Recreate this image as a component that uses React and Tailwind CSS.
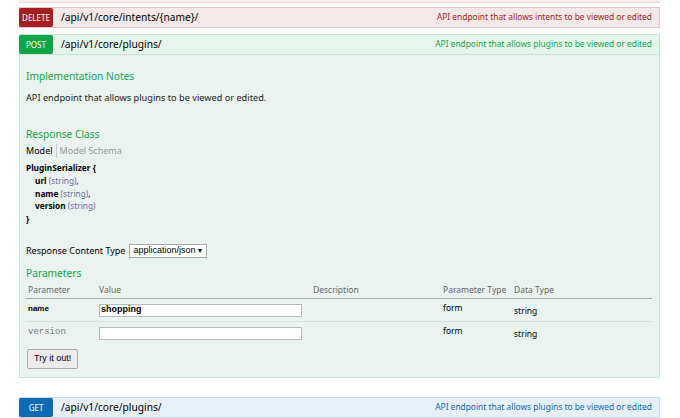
const FONT = { fontFamily: '"Noto Sans", "Open Sans", sans-serif' }
const ARIAL = { fontFamily: '"Liberation Sans", Arial, sans-serif' }

function Heading({ method, path, desc, badge, bar, text }) {
  return (
    <div className={`flex items-center h-[21px] border ${bar}`}>
      <span className={`w-[34px] h-full -ml-px -my-px flex items-center justify-center text-[8px] uppercase text-white rounded-[2px] ${badge}`}>
        {method}
      </span>
      <span className="pl-[8px] text-[10.2px] text-black">{path}</span>
      <span className={`ml-auto pr-[7px] text-[8.4px] ${text}`}>{desc}</span>
    </div>
  )
}

export default function App() {
  return (
    <div className="w-[680px] h-[418px] bg-white overflow-hidden" style={FONT}>
      <div className="ml-[19px] w-[641px]">
        <div className="h-[3px] bg-[#faf0ef] border-b border-[#f0d9d3]" />
        <div className="mt-[4px]">
          <Heading
            method="delete"
            path="/api/v1/core/intents/{name}/"
            desc="API endpoint that allows intents to be viewed or edited"
            badge="bg-[#a41e22]"
            bar="bg-[#f5e8e8] border-[#e8c6c7]"
            text="text-[#a41e22]"
          />
        </div>
        <div className="mt-[6px]">
          <Heading
            method="post"
            path="/api/v1/core/plugins/"
            desc="API endpoint that allows plugins to be viewed or edited"
            badge="bg-[#10a54a]"
            bar="bg-[#e7f6ec] border-[#c3e8d1]"
            text="text-[#10a54a]"
          />
          <div className="h-[323px] bg-[#ebf3f0] border border-t-0 border-[#c3e8d1] px-[6px] pt-[13px]">
            <h4 className="text-[10.2px] text-[#10a54a] leading-[16px]">Implementation Notes</h4>
            <p className="mt-[7px] text-[9.2px] text-[#222] leading-[14px]">API endpoint that allows plugins to be viewed or edited.</p>

            <h4 className="mt-[21px] text-[10.2px] text-[#10a54a] leading-[16px]">Response Class</h4>
            <div className="mt-[2px] flex items-center text-[9px] leading-[14px]">
              <span className="text-black pr-[3px] border-r border-[#ccc]">Model</span>
              <span className="pl-[3px] text-[#999]">Model Schema</span>
            </div>
            <div className="mt-[4px] text-[8.3px] leading-[12.8px] text-black">
              <div className="font-bold">PluginSerializer {'{'}</div>
              <div className="pl-[9px]"><b>url</b> <span className="text-[#6a6aa8]">(string)</span>,</div>
              <div className="pl-[9px]"><b>name</b> <span className="text-[#6a6aa8]">(string)</span>,</div>
              <div className="pl-[9px]"><b>version</b> <span className="text-[#6a6aa8]">(string)</span></div>
              <div className="font-bold">{'}'}</div>
            </div>

            <div className="mt-[18px] flex items-center text-[9px] text-black">
              <span>Response Content Type</span>
              <span className="ml-[4px] h-[14px] w-[78px] flex items-center justify-between px-[3px] bg-white border border-[#a9a9a9] text-[9px] leading-none" style={ARIAL}>
                application/json <span className="text-[7px]">▼</span>
              </span>
            </div>

            <h4 className="mt-[7px] text-[10.2px] text-[#10a54a] leading-[16px]">Parameters</h4>
            <table className="mt-[3px] w-[626px] text-[8.5px] border-collapse">
              <thead>
                <tr className="text-[#666] text-left border-b border-[#aaa]">
                  <th className="font-normal pl-[2px] pb-[1px] w-[73px]">Parameter</th>
                  <th className="font-normal pb-[1px] w-[214px]">Value</th>
                  <th className="font-normal pb-[1px] w-[130px]">Description</th>
                  <th className="font-normal pb-[1px] w-[71px]">Parameter Type</th>
                  <th className="font-normal pb-[1px]">Data Type</th>
                </tr>
              </thead>
              <tbody>
                <tr className="border-b border-[#ddd] h-[23px] align-top">
                  <td className="pl-[2px] pt-[4px] font-bold text-[8px] text-black" style={ARIAL}>name</td>
                  <td className="pt-[5px]">
                    <div className="h-[13px] w-[203px] bg-white border border-[#bbb] flex items-center px-[1px] text-[9px] font-bold text-black" style={ARIAL}>shopping</div>
                  </td>
                  <td />
                  <td className="pt-[3px] text-black">form</td>
                  <td className="pt-[6px] text-black">string</td>
                </tr>
                <tr className="h-[22px] align-top">
                  <td className="pl-[2px] pt-[4px] text-[9px] text-[#777]" style={{ fontFamily: '"Liberation Mono", monospace' }}>version</td>
                  <td className="pt-[5px]">
                    <div className="h-[13px] w-[203px] bg-white border border-[#bbb]" />
                  </td>
                  <td />
                  <td className="pt-[3px] text-black">form</td>
                  <td className="pt-[6px] text-black">string</td>
                </tr>
              </tbody>
            </table>
            <button className="mt-[3px] ml-[1px] h-[20px] px-[6px] text-[9px] text-black bg-[#ececec] border border-[#aaa] rounded-[2px]" style={ARIAL}>
              Try it out!
            </button>
          </div>
        </div>
        <div className="mt-[19px]">
          <Heading
            method="get"
            path="/api/v1/core/plugins/"
            desc="API endpoint that allows plugins to be viewed or edited"
            badge="bg-[#0f6ab4]"
            bar="bg-[#e7f0f7] border-[#c3d9ec]"
            text="text-[#0f6ab4]"
          />
        </div>
      </div>
    </div>
  )
}
